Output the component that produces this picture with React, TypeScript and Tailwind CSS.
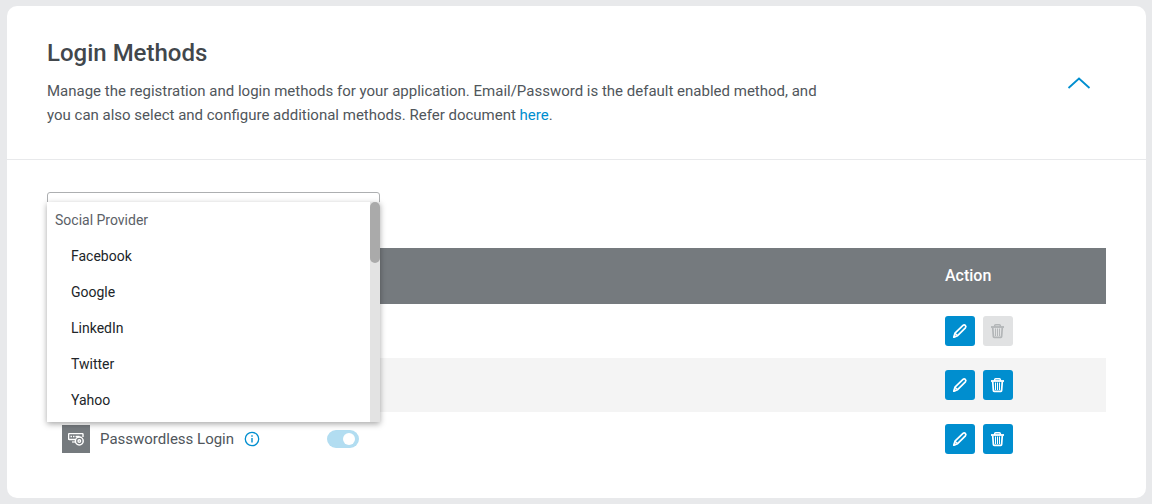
import { useState } from "react";

const providers = ["Facebook", "Google", "LinkedIn", "Twitter", "Yahoo"];

function PencilIcon() {
  return (
    <svg viewBox="0 0 16 16" className="size-4" fill="none" stroke="currentColor" strokeWidth="1.7" strokeLinejoin="round" aria-hidden="true">
      <path d="M1.800 14.200l1.200-4L11 2.400q1.200-1 2.300 0t.1 2.400L5.600 12.700z" />
      <path d="M3 10.200l2.600 2.500" strokeWidth="1.400" />
      <path d="M1.800 14.200l.6-2 1.400 1.400z" fill="currentColor" strokeWidth="1" />
    </svg>
  );
}

function TrashIcon() {
  return (
    <svg viewBox="0 0 16 16" className="size-4" fill="none" stroke="currentColor" aria-hidden="true">
      <path d="M1 4h13" strokeWidth="1.800" />
      <path d="M4.700 4V2.600q0-.9.900-.9h3.800q.9 0 .9.900V4" strokeWidth="1.500" />
      <path d="M2.700 4.500l.7 9.100q0 .8.800.8h6.600q.8 0 .8-.8l.7-9.100" strokeWidth="1.700" />
      <path d="M5.500 5.500v7.500M7.500 5.500v7.500M9.500 5.500v7.500" strokeWidth="1" />
    </svg>
  );
}

function PasswordlessIcon() {
  return (
    <span className="flex size-7 shrink-0 items-center justify-center bg-[#757a7e] text-white">
      <svg viewBox="0 0 16 14" className="h-[14px] w-4" fill="none" stroke="currentColor" aria-hidden="true">
        <path d="M7 7.500H1.200q-.6 0-.6-.6V2.200q0-.6.600-.6h13.200q.6 0 .6.600V5" strokeWidth="1.400" />
        <path d="M2.500 4.500h1.500M5 4.500h1.500M7.500 4.500h4" strokeWidth="1.500" />
        <circle cx="11.300" cy="9" r="3.900" strokeWidth="1.500" />
        <circle cx="11.300" cy="9" r="1.300" strokeWidth="1.400" />
        <path d="M4 10h3.500" strokeWidth="1.200" />
      </svg>
    </span>
  );
}

function Actions({ removable = true }: { removable?: boolean }) {
  return (
    <div className="flex gap-2">
      <button type="button" aria-label="Edit" className="flex size-[30px] items-center justify-center rounded-[3px] bg-[#008ecf] text-white">
        <PencilIcon />
      </button>
      <button
        type="button"
        aria-label="Delete"
        disabled={!removable}
        className="flex size-[30px] items-center justify-center rounded-[3px] bg-[#008ecf] text-white disabled:bg-[#e1e2e3] disabled:text-[#b3b6b8]"
      >
        <TrashIcon />
      </button>
    </div>
  );
}

function ProviderPicker() {
  return (
    <div className="relative w-[333px]">
      <select
        aria-label="Login method"
        className="block h-10 w-full appearance-none rounded-[3px] border border-[#adafb1] bg-white px-2"
      />
      <div className="absolute inset-x-0 top-[10px] z-10 flex h-[220px] bg-white text-sm text-[#212529] shadow-[0_2px_6px_rgba(0,0,0,0.35)]">
        <div role="listbox" aria-label="Providers" className="grow">
          <div className="px-2 leading-9 text-[#5b6167]">Social Provider</div>
          {providers.map((name) => (
            <div key={name} role="option" aria-selected="false" className="px-6 leading-9">
              {name}
            </div>
          ))}
        </div>
        <div className="w-[10px] bg-[#e3e3e3]">
          <div className="h-[61px] rounded-full bg-[#aaaaaa]" />
        </div>
      </div>
    </div>
  );
}

export default function App() {
  const [open, setOpen] = useState(true);

  return (
    <main className="min-h-screen bg-[#e8e9eb] py-[6px] pr-[6px] pl-[7px] font-['Roboto',sans-serif] text-[#42474c]">
      <section className="rounded-[10px] bg-white">
        <header className="flex items-center justify-between border-b border-[#e8e9eb] px-10 pt-8 pb-8">
          <div>
            <h1 className="mb-[11px] text-2xl leading-[30px] font-medium">Login Methods</h1>
            <p className="text-[15px] leading-6 text-[#50565b]">
              Manage the registration and login methods for your application. Email/Password is the default enabled method, and
              <br />
              you can also select and configure additional methods. Refer document{" "}
              <a href="#docs" className="text-[#008ecf]">here</a>.
            </p>
          </div>
          <button
            type="button"
            aria-label="Toggle login methods"
            aria-expanded={open}
            onClick={() => setOpen(!open)}
            className="mr-[15px] text-[#008ecf]"
          >
            <svg viewBox="0 0 24 14" className="h-[14px] w-6" fill="none" stroke="currentColor" strokeWidth="1.800" aria-hidden="true">
              <path d="M1.500 12L12 2.500 22.500 12" />
            </svg>
          </button>
        </header>
        {open && (
          <div className="px-10 pt-8 pb-8">
            <ProviderPicker />
            <table className="mt-4 w-full table-fixed border-collapse text-left">
              <thead>
                <tr className="h-14 bg-[#757a7e] text-white">
                  <th className="w-[25%]" />
                  <th />
                  <th className="w-[161px] p-0 text-base font-medium">Action</th>
                </tr>
              </thead>
              <tbody>
                <tr className="h-[54px]">
                  <td />
                  <td />
                  <td className="p-0"><Actions removable={false} /></td>
                </tr>
                <tr className="h-[54px] bg-[#f4f4f4]">
                  <td />
                  <td />
                  <td className="p-0"><Actions /></td>
                </tr>
                <tr className="h-[54px]">
                  <td className="py-0 pr-0 pl-[15px]">
                    <div className="flex items-center">
                      <PasswordlessIcon />
                      <span className="ml-[10px] text-[15px] text-[#50565b]">Passwordless Login</span>
                      <svg viewBox="0 0 16 16" className="ml-[10px] size-4" fill="none" stroke="#008ecf" role="img" aria-label="More information">
                        <circle cx="8" cy="8" r="6.700" strokeWidth="1.300" />
                        <path d="M8 7v4.500M8 4.300v1.500" strokeWidth="1.400" />
                      </svg>
                    </div>
                  </td>
                  <td className="p-0 pl-[15px]">
                    <label className="flex w-8">
                      <input type="checkbox" defaultChecked disabled aria-label="Enable Passwordless Login" className="peer sr-only" />
                      <span className="flex h-[18px] w-8 items-center rounded-full bg-[#c9cccf] px-[4px] peer-checked:justify-end peer-checked:bg-[#b2ddf1]">
                        <span className="size-3 rounded-full bg-white" />
                      </span>
                    </label>
                  </td>
                  <td className="p-0"><Actions /></td>
                </tr>
              </tbody>
            </table>
          </div>
        )}
      </section>
    </main>
  );
}
